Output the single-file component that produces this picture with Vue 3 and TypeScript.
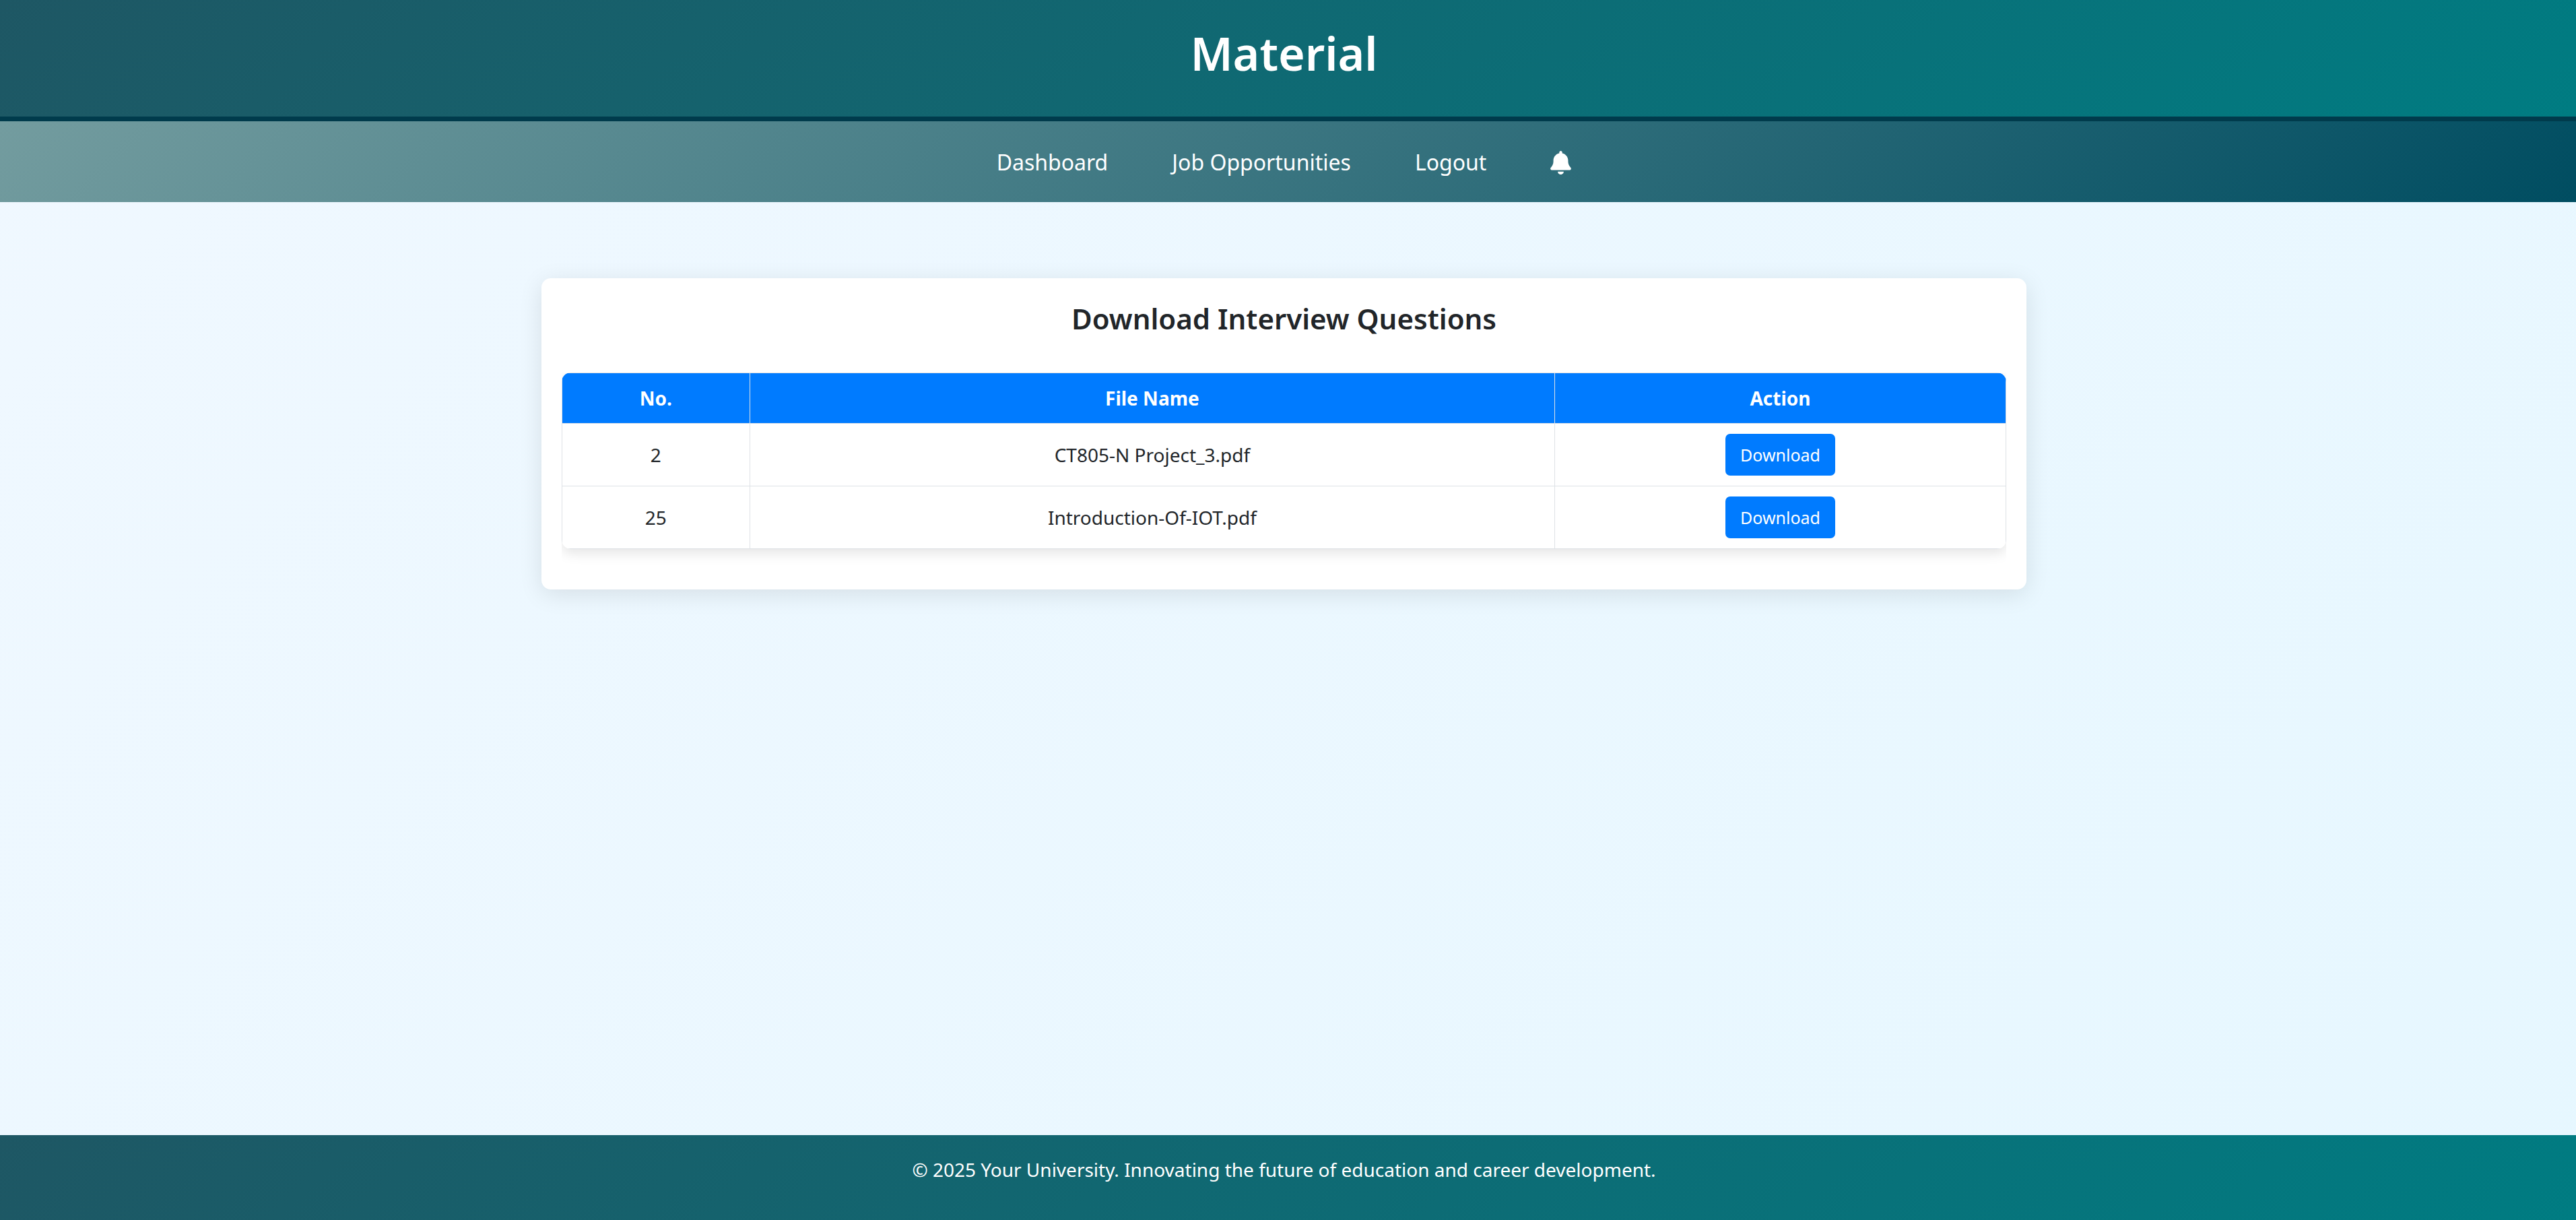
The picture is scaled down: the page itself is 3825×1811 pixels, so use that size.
<script setup lang="ts">
interface Material {
  id: number
  fileName: string
}

const links: string[] = ['Dashboard', 'Job Opportunities', 'Logout']

const materials: Material[] = [
  { id: 2, fileName: 'CT805-N Project_3.pdf' },
  { id: 25, fileName: 'Introduction-Of-IOT.pdf' },
]
</script>

<template>
  <div class="page">
    <header class="header">
      <h1>Material</h1>
    </header>

    <nav class="nav" aria-label="Main">
      <a v-for="link in links" :key="link" href="#">{{ link }}</a>
      <a href="#" class="bell" aria-label="Notifications">
        <svg viewBox="0 0 448 512" aria-hidden="true">
          <path
            d="M224 0c-17.7 0-32 14.300-32 32v19.200C119 66 64 130.600 64 208v18.800c0 47-17.300 92.400-48.500 127.600l-7.400 8.300c-8.400 9.400-10.400 22.900-5.300 34.400S19.400 416 32 416h384c12.600 0 24-7.400 29.200-18.900s3.100-25-5.300-34.400l-7.400-8.300C401.300 319.200 384 273.900 384 226.800V208c0-77.400-55-142-128-156.800V32c0-17.700-14.300-32-32-32zm45.300 493.300c12-12 18.700-28.300 18.700-45.300H160c0 17 6.700 33.300 18.700 45.300S207 512 224 512s33.300-6.700 45.300-18.700z"
          />
        </svg>
      </a>
    </nav>

    <main class="main">
      <section class="card">
        <h2>Download Interview Questions</h2>
        <div class="table-wrap">
          <table>
            <thead>
              <tr>
                <th class="col-no" scope="col">No.</th>
                <th scope="col">File Name</th>
                <th class="col-action" scope="col">Action</th>
              </tr>
            </thead>
            <tbody>
              <tr v-for="item in materials" :key="item.id">
                <td>{{ item.id }}</td>
                <td>{{ item.fileName }}</td>
                <td><button type="button">Download</button></td>
              </tr>
            </tbody>
          </table>
        </div>
      </section>
    </main>

    <footer class="footer">
      <p>© 2025 Your University. Innovating the future of education and career development.</p>
    </footer>
  </div>
</template>

<style>
body {
  margin: 0;
}
</style>

<style scoped>
.page {
  --gutter: 12px;
  display: flex;
  flex-direction: column;
  min-height: 100vh;
  background: linear-gradient(135deg, #f0f8ff, #e6f7ff);
  color: #212529;
  font-family: "Segoe UI", "Noto Sans", "Open Sans", sans-serif;
  font-size: 28px;
}

.header,
.footer {
  padding: 35px var(--gutter) 35px 0;
  background: linear-gradient(135deg, #1e5764, #007c82);
  color: #fff;
  text-align: center;
}

.header {
  border-bottom: 7px solid #003b4c;
}

h1 {
  margin: 0 0 15px;
  font-size: 68px;
  font-weight: 600;
  line-height: 88px;
}

.nav {
  display: flex;
  align-items: center;
  justify-content: center;
  gap: 95px;
  padding: 39px var(--gutter) 37px 0;
  background: linear-gradient(135deg, #739c9f, #004d61);
}

.nav a {
  color: #fff;
  font-size: 32px;
  line-height: 44px;
  text-decoration: none;
}

.nav .bell {
  display: flex;
}

.bell svg {
  width: 31px;
  height: 35px;
  fill: currentColor;
}

.main {
  flex: 1;
  padding: 113px var(--gutter) 113px 0;
}

.card {
  box-sizing: border-box;
  max-width: 2205px;
  margin: 0 auto;
  padding: 30px;
  border-radius: 14px;
  background: #fff;
  box-shadow: 0 7px 35px rgba(0, 0, 0, 0.1);
}

h2 {
  margin: 0 0 50px;
  font-size: 42px;
  font-weight: 600;
  line-height: 60px;
  text-align: center;
}

.table-wrap {
  overflow: hidden;
  padding-bottom: 30px;
}

table {
  width: 100%;
  table-layout: fixed;
  border-collapse: collapse;
  border-radius: 14px;
  overflow: hidden;
  box-shadow: 0 7px 18px rgba(0, 0, 0, 0.1);
}

th,
td {
  box-sizing: border-box;
  padding: 15px;
  border: 1px solid #dee2e6;
  line-height: 42px;
  text-align: center;
  vertical-align: middle;
}

th {
  padding: 16px;
  background: #007bff;
  color: #fff;
  font-weight: 700;
}

.col-no {
  width: 13%;
}

.col-action {
  width: 31.25%;
}

button {
  display: block;
  margin: 0 auto;
  padding: 13px 22px;
  border: 0;
  border-radius: 7px;
  background: #007bff;
  color: #fff;
  font-family: inherit;
  font-size: 25px;
  line-height: 36px;
}

.footer p {
  margin: 0 0 24px;
  line-height: 32px;
}
</style>
